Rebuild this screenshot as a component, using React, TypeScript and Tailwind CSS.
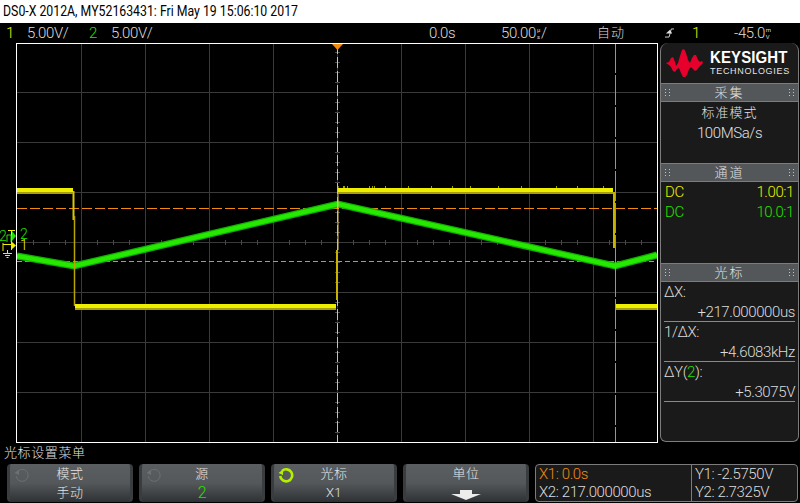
const sans = "font-['Roboto','Noto_Sans_CJK_SC',sans-serif]";
const arial = "font-['Liberation_Sans',sans-serif]";

const vGrid = [81, 145, 209, 273, 337, 401, 465, 529, 593];
const hGrid = [93, 143, 193, 243, 293, 343, 393];
const xTicks = Array.from({ length: 39 }, (_, i) => 33 + i * 16).filter((x) => (x - 17) % 64 !== 0);
const yTicks = Array.from({ length: 39 }, (_, i) => 53 + i * 10).filter((y) => (y - 43) % 50 !== 0);
const spikes = [343, 344, 347, 369, 372, 374, 385, 408, 431, 452, 470, 498, 521, 556, 577, 603];

function Scope() {
  return (
    <svg viewBox="16 43 642 400" className="block h-[400px] w-[642px]">
      <rect x="16" y="43" width="642" height="400" fill="#000" />
      {vGrid.map((x) => (
        <line key={x} x1={x + 0.5} y1="43" x2={x + 0.5} y2="443" stroke="#3a3a3a" />
      ))}
      {hGrid.map((y) => (
        <line key={y} x1="17" y1={y - 0.5} x2="657" y2={y - 0.5} stroke="#3a3a3a" />
      ))}
      {xTicks.map((x) => (
        <line key={x} x1={x + 0.5} y1="240" x2={x + 0.5} y2="245" stroke="#4a4a4a" />
      ))}
      {yTicks.map((y) => (
        <line key={y} x1="335" y1={y - 0.5} x2="340" y2={y - 0.5} stroke="#4a4a4a" />
      ))}
      <line x1="17" y1="208.5" x2="657" y2="208.5" stroke="#f08a10" strokeDasharray="10 3" />
      <line x1="17" y1="261.5" x2="657" y2="261.5" stroke="#f08a10" strokeDasharray="5 3" />
      <polyline points="17,256 74,266 338,204 615,266 657,255" fill="none" stroke="#10b000" strokeWidth="7" />
      <polyline points="17,256 74,266 338,204 615,266 657,255" fill="none" stroke="#26e800" strokeWidth="4.5" />
      <line x1="337.5" y1="43" x2="337.5" y2="443" stroke="#f4b878" strokeDasharray="11 3" />
      <line x1="615.5" y1="43" x2="615.5" y2="443" stroke="#d88a20" strokeDasharray="30 2" />
      <path d="M73.5 191V220" stroke="#d8c800" strokeWidth="2" fill="none" />
      <path d="M74.5 216V306" stroke="#b8a400" strokeWidth="1.5" fill="none" />
      <path d="M337 250V300" stroke="#c8b400" strokeWidth="2" fill="none" />
      <path d="M338 186V250" stroke="#d8c060" strokeWidth="1" fill="none" />
      <path d="M614 192V248" stroke="#c8b400" strokeWidth="2" fill="none" />
      {spikes.map((x) => (
        <line key={x} x1={x + 0.5} y1="186" x2={x + 0.5} y2="188" stroke="#a8a000" />
      ))}
      {[
        [17, 188, 56],
        [75, 304, 261],
        [338, 188, 275],
        [616, 304, 41],
      ].map(([x, y, w]) => (
        <g key={x}>
          <rect x={x} y={y} width={w} height="6" fill="#a8a000" />
          <rect x={x} y={y} width={w} height="4" fill="#eeee00" />
        </g>
      ))}
      <path d="M332 44H343L337.5 50Z" fill="#f08a10" />
      <rect x="16.5" y="43.5" width="641" height="399" fill="none" stroke="#fff" />
      <text x="20" y="239" fontSize="14" fontWeight="300" fill="#24e000" className={sans}>2</text>
      <text x="20" y="250" fontSize="14" fontWeight="300" fill="#eeee00" className={sans}>1</text>
    </svg>
  );
}

function LeftMarkers() {
  return (
    <svg viewBox="0 0 16 400" className="block h-[400px] w-[16px]">
      <text x="-1" y="198" fontSize="14" fontWeight="300" fill="#24e000" className={sans}>2</text>
      <path d="M8 187.5H15M11.5 187.5V207" stroke="#eeee00" fill="none" />
      <path d="M7 199V192H11V199" stroke="#24e000" fill="none" />
      <path d="M12 188L16 193L12 198Z" fill="#24e000" />
      <path d="M3 200V208M3 201.5H12" stroke="#eeee00" fill="none" />
      <path d="M11 198L16 202.5L11 207Z" fill="#eeee00" />
      <path d="M7.5 207V210M3 210.5H12M5 212.5H10M6.5 214.5H8.5" stroke="#eeee00" fill="none" />
    </svg>
  );
}

function KeysightLogo() {
  return (
    <svg viewBox="0 0 38 30" className="h-[30px] w-[38px] shrink-0">
      <path
        d="M0 14L3 13L5 9L7 8L9 13L10 17L12 14L14 7L16 1L18 0L20 4L22 11L24 14L26 9L28 6L30 6L32 11L34 13L36 12L37 14L35 16L33 18L31 21L29 22L27 20L25 18L23 20L21 26L19 28L17 28L15 24L13 19L11 20L9 23L7 22L5 18L3 16Z"
        fill="#e8002c"
      />
    </svg>
  );
}

function Grip() {
  return (
    <svg viewBox="0 0 5 8" className="h-2 w-[5px]">
      {[0, 3, 6].map((y) => (
        <g key={y}>
          <rect x="0" y={y} width="1" height="1" fill="#c4c4c4" />
          <rect x="4" y={y} width="1" height="1" fill="#c4c4c4" />
        </g>
      ))}
    </svg>
  );
}

function PanelHeader({ title }: { title: string }) {
  return (
    <div className="flex h-[19px] items-center justify-between border-y border-[#7c7c7c] bg-[#53575a] px-1 text-[13px] leading-none tracking-[2px] text-[#e0e0e0]">
      <Grip />
      <span>{title}</span>
      <Grip />
    </div>
  );
}

function Knob({ active }: { active?: boolean }) {
  const color = active ? "#b4f000" : "#6c7072";
  return (
    <svg viewBox="0 0 16 16" className="absolute left-[4px] top-[3px] h-4 w-4">
      <path d="M4 4A6 6 0 1 1 2.2 9" fill="none" stroke={color} strokeWidth={active ? 2.6 : 1} />
      <path d="M0.5 6L5 2.5V8Z" fill={color} />
    </svg>
  );
}

function SoftKey({
  title,
  value,
  active,
  valueClass,
  knob = true,
  children,
}: {
  title: string;
  value?: string;
  active?: boolean;
  valueClass?: string;
  knob?: boolean;
  children?: React.ReactNode;
}) {
  return (
    <div className="relative flex h-[38px] w-[126px] flex-col items-center rounded-[4px] border-x-[3px] border-[#3a3d3f] bg-gradient-to-b from-[#5a5e61] via-[#54585a] to-[#2f3234] text-[13px] leading-[19px] text-[#e4e4e4]">
      {knob && <Knob active={active} />}
      <div className="tracking-[0.5px]">{title}</div>
      {value ? <div className={valueClass ?? "tracking-[0.5px]"}>{value}</div> : children}
    </div>
  );
}

function CursorRow({ label, value }: { label: React.ReactNode; value: string }) {
  return (
    <>
      <div className="h-5 leading-5">{label}</div>
      <div className="h-5 border-b border-[#8a8a8a] text-right leading-5">{value}</div>
    </>
  );
}

// the tiny stacked unit the scope draws next to a value
function Unit({ top, bottom }: { top: string; bottom: string }) {
  return (
    <span className="mx-[1px] inline-flex flex-col align-middle text-[6px] font-normal leading-[7px]">
      <span>{top}</span>
      <span>{bottom}</span>
    </span>
  );
}

export default function App() {
  return (
    <div className={`flex h-[503px] w-[800px] flex-col overflow-hidden bg-black text-[15px] font-light tracking-[-0.4px] text-[#dcdcdc] ${sans}`}>
      <div className="h-[23px] bg-white pl-[3px] font-normal leading-[23px] tracking-normal text-black">
        <span className="inline-block origin-left scale-x-[0.82] whitespace-nowrap">
          DS0-X 2012A, MY52163431: Fri May 19 15:06:10 2017
        </span>
      </div>

      <div className="flex h-5 items-center leading-5">
        <span className="ml-[6px] w-[21px] text-[#eeee00]">1</span>
        <span className="w-[62px]">5.00V/</span>
        <span className="w-[22px] text-[#24e000]">2</span>
        <span className="w-[318px]">5.00V/</span>
        <span className="w-[72px]">0.0s</span>
        <span className="flex w-[96px] items-center">
          50.00
          <Unit top="µ" bottom="s" />/
        </span>
        <span className="w-[66px] text-[13px] tracking-[1px]">自动</span>
        <span className="w-[29px] pl-[2px]">
          <svg viewBox="0 0 10 12" className="h-3 w-[9px]">
            <path d="M0 10.5H4.5L7 1.5H10" fill="none" stroke="#e0e0e0" />
            <path d="M1 6.5H8L5.5 2.5Z" fill="#e0e0e0" />
          </svg>
        </span>
        <span className="w-[42px] text-[#eeee00]">1</span>
        <span className="flex items-center">
          -45.0
          <Unit top="m" bottom="V" />
        </span>
      </div>

      <div className="flex h-[400px]">
        <div className="w-4 shrink-0">
          <LeftMarkers />
        </div>
        <Scope />
        <div className="ml-[2px] flex h-[399px] w-[139px] flex-col overflow-hidden rounded-t-[8px] rounded-b-[6px] border-x border-b border-[#7c7c7c] bg-[#1a1a1a]">
          <div className={`flex h-[40px] items-center gap-[6px] pl-[5px] pt-[2px] tracking-normal ${arial}`}>
            <KeysightLogo />
            <div className="text-white">
              <div className="origin-bottom scale-y-110 text-[15px] font-bold leading-[14px] tracking-[0.1px]">KEYSIGHT</div>
              <div className="text-[9px] font-normal leading-[12px] tracking-[0.7px] text-[#e4e4e4]">TECHNOLOGIES</div>
            </div>
          </div>
          <PanelHeader title="采集" />
          <div className="h-[61px] pt-[1px] text-center text-[13px] leading-[20px] text-[#e0e0e0]">
            <div className="tracking-[1px]">标准模式</div>
            <div className="text-[15px]">100MSa/s</div>
          </div>
          <PanelHeader title="通道" />
          <div className="h-[81px] px-1 leading-5">
            <div className="flex justify-between text-[#eeee00]">
              <span>DC</span>
              <span>1.00:1</span>
            </div>
            <div className="flex justify-between text-[#24e000]">
              <span>DC</span>
              <span>10.0:1</span>
            </div>
          </div>
          <PanelHeader title="光标" />
          <div className="px-[3px]">
            <CursorRow label="ΔX:" value="+217.000000us" />
            <CursorRow label="1/ΔX:" value="+4.6083kHz" />
            <CursorRow
              label={
                <>
                  ΔY(<span className="text-[#24e000]">2</span>):
                </>
              }
              value="+5.3075V"
            />
          </div>
        </div>
      </div>

      <div className="h-[21px] pl-[4px] text-[13px] leading-[20px] tracking-[0.6px] text-[#e0e0e0]">光标设置菜单</div>

      <div className="flex gap-[6px] pl-[7px]">
        <SoftKey title="模式" value="手动" />
        <SoftKey title="源" value="2" valueClass="text-[16px] text-[#24e000]" />
        <SoftKey title="光标" value="X1" active />
        <SoftKey title="单位" knob={false}>
          <svg viewBox="0 0 30 10" className="mt-[7px] h-[10px] w-[30px]">
            <path d="M9 0H21V4H30L15 10L0 4H9Z" fill="#ececec" />
          </svg>
        </SoftKey>
        <div className="flex h-[38px] w-[263px] rounded-[4px] border border-[#7c7c7c] bg-[#1a1a1a] leading-[18px]">
          <div className="w-[156px] border-r border-[#7c7c7c] pl-[3px]">
            <div className="text-[#f08a10]">X1: 0.0s</div>
            <div>X2: 217.000000us</div>
          </div>
          <div className="pl-[3px]">
            <div>Y1: -2.5750V</div>
            <div>Y2: 2.7325V</div>
          </div>
        </div>
      </div>
    </div>
  );
}
